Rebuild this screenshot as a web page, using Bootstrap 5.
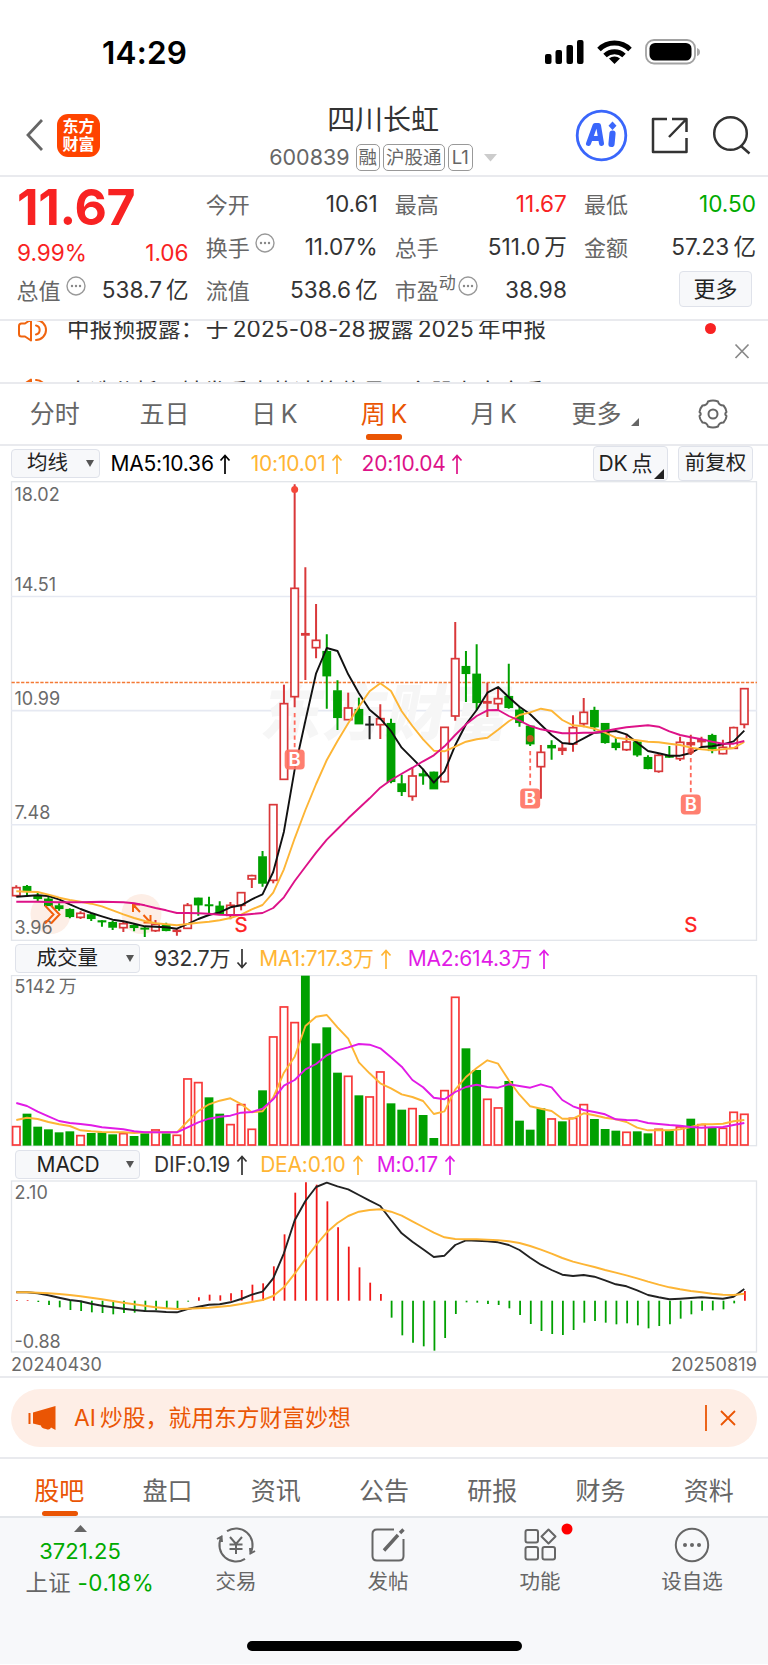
<!DOCTYPE html>
<html lang="zh-CN">
<head>
<meta charset="utf-8">
<meta name="viewport" content="width=device-width, initial-scale=1">
<title>四川长虹 600839</title>
<link rel="stylesheet" href="https://cdn.jsdelivr.net/npm/bootstrap@5.3.0/dist/css/bootstrap.min.css">
<style>
:root{--ink:#333;--sub:#666;--up:#f82222;--down:#0a0;--brand:#ea5504;--line:#e3e6ec;--panel:#f7f8fa}
body{font-family:"Inter","Noto Sans CJK SC",sans-serif;color:var(--ink);background:#fff;width:768px;line-height:1;overflow-x:hidden}
svg{display:block;flex:none}
.rule-b{border-bottom:2px solid #e9eaee}
.statusbar{height:89px;padding:16px 68px 0 102px}
.clock{font-size:31.5px;font-weight:600;color:#000;letter-spacing:.2px}
.topbar{height:88px;padding:6px 17px 0 26px}
.side{width:230px}
.logo{width:43px;height:43px;border-radius:11px;background:#ff4400;color:#fff;font-size:16px;font-weight:700;line-height:18px;margin-left:14px}
.titlebox{margin:3px 11px 0 0}
.stock-name{font-size:28px;line-height:41px;letter-spacing:-.1px;margin-top:-2px;padding-bottom:3px}
.stock-code{font-size:21.5px;color:var(--sub);margin-right:6px}
.tagbox{height:27px;border:1.5px solid #999;border-radius:5px;color:var(--sub);font-size:18.5px;padding:0 2px;margin-right:3px}
.quote{height:144px;padding:0 12px 0 17px;font-size:22.6px}
.qrow{height:43px}
.qcol{width:172px}
.qcol+.qcol{margin-left:17.5px;padding-top:6px}
.qlab{color:var(--sub);font-size:22px;margin-left:-.5px}
.qlab svg{margin:-4px 0 0 5px}
.dyn{font-size:17px;margin-top:-5px}
.last-price{font-size:50px;font-weight:700;color:var(--up);letter-spacing:-.3px;height:55px}
.chg{color:var(--up);height:33px}
.up{color:var(--up)}.down{color:var(--down)}
.softbtn{background:var(--panel);border:1.5px solid #dfe2ea;border-radius:4px;color:#222}
.notice{height:63px;overflow:hidden;padding-left:18px;font-size:22.6px;letter-spacing:.15px}
.notice-line{height:53px}
.ktab{height:62px;font-size:25px;color:var(--sub)}
.bar-u{position:absolute;left:50%;transform:translateX(-50%);bottom:4px;width:36px;height:6px;border-radius:2.5px;background:var(--brand)}
.ind{font-size:21px}
.ind .tx{white-space:nowrap;letter-spacing:-.2px}
.or{color:#ffb534}.pk{color:#dd1288}.mg{color:#e11be6}
.promo{height:58px;border-radius:29px;background:#feeee6;color:var(--brand);margin:0 11px;padding:0 20px 0 17px;font-size:22.8px}
.btabs{height:57px;padding:0 5px;font-size:25px;color:var(--sub)}
.btabs .col{padding-top:7px}
.tabbar{height:148px;background:var(--panel);border-top:2px solid #e3e6ea;color:var(--sub);font-size:20.5px}
.tb-item{width:152px;height:80px}
.homebar{width:275px;height:10px;border-radius:5px;background:#000;margin:43px auto 0}
.dates{height:25px;padding:0 11px;font-size:18px;color:#6a6a6a;letter-spacing:.1px}
</style>
</head>
<body>
<svg width="0" height="0" class="position-absolute">
  <symbol id="arr-up" viewBox="0 0 12 20"><path d="M6 20V1.5M1.5 6.5L6 1.5L10.5 6.5" fill="none" stroke="currentColor" stroke-width="1.7"/></symbol>
  <symbol id="arr-dn" viewBox="0 0 12 20"><path d="M6 0V18.5M1.5 13.5L6 18.5L10.5 13.5" fill="none" stroke="currentColor" stroke-width="1.7"/></symbol>
  <symbol id="more-c" viewBox="0 0 20 20"><circle cx="10" cy="10" r="9" fill="none" stroke="#999" stroke-width="1.4"/><g fill="#888"><circle cx="6" cy="10" r="1.2"/><circle cx="10" cy="10" r="1.2"/><circle cx="14" cy="10" r="1.2"/></g></symbol>
  <symbol id="speaker" viewBox="0 0 32 24"><g fill="none" stroke="#f0640f" stroke-width="2" stroke-linecap="round" stroke-linejoin="round"><path d="M13 1.500V22.500L7 18.500H3.500Q1 18.500 1 16V8Q1 5.500 3.500 5.500H7L13 1.500Z"/><path d="M18 7.500A4.600 4.600 0 0 1 18 16.500M18 2A10 10 0 0 1 18 22"/></g></symbol>
</svg>

<header>
  <div class="statusbar d-flex align-items-center justify-content-between">
    <span class="clock">14:29</span>
    <svg width="156" height="28" viewBox="544 39 156 28">
      <rect x="545" y="54" width="6.500" height="10" rx="2"/><rect x="555.500" y="50" width="6.500" height="14" rx="2"/><rect x="566.500" y="45" width="6.500" height="19" rx="2"/><rect x="577" y="40" width="6.500" height="24" rx="2"/>
      <g fill="none" stroke="#000" stroke-width="5"><path d="M599 49.500A22 22 0 0 1 630 49.500"/><path d="M605 55.500A14 14 0 0 1 624 55.500"/></g><path d="M614.500 64L609 58.600A8.200 8.200 0 0 1 620 58.600Z"/>
      <rect x="646" y="40" width="49" height="23.500" rx="8" fill="none" stroke="#a2a2a2" stroke-width="1.800"/><rect x="649.500" y="43" width="42" height="17.500" rx="5.500"/><path d="M697 48Q700 49 700 52T697 56Z" fill="#aaa"/>
    </svg>
  </div>
  <div class="topbar rule-b d-flex align-items-center justify-content-between">
    <div class="side d-flex align-items-center">
      <svg width="17" height="32" viewBox="0 0 17 32"><path d="M16 1L2 16L16 31" fill="none" stroke="#666" stroke-width="2.800"/></svg>
      <div class="logo d-flex flex-column justify-content-center text-center"><span>东方</span><span>财富</span></div>
    </div>
    <div class="titlebox d-flex flex-column align-items-center">
      <div class="stock-name">四川长虹</div>
      <div class="d-flex align-items-center">
        <span class="stock-code">600839</span>
        <span class="tagbox d-flex align-items-center">融</span><span class="tagbox d-flex align-items-center">沪股通</span><span class="tagbox d-flex align-items-center" style="padding:0 3px">L1</span>
        <svg width="13" height="8" class="ms-2"><path d="M0 0H13L6.500 7.500Z" fill="#ccc"/></svg>
      </div>
    </div>
    <div class="side d-flex justify-content-end">
      <svg width="176" height="54" viewBox="575 108 176 54">
        <circle cx="601.500" cy="135.500" r="24.300" fill="#fff" stroke="#3a66fb" stroke-width="2.800"/>
        <g fill="none" stroke="#3a66fb" stroke-linejoin="round" stroke-linecap="round"><path d="M588.500 143.500L595 125.500H598.500L601.500 143.500M592.500 138.500H600" stroke-width="5"/><path d="M612.500 133.500L611.500 144" stroke-width="6.200"/></g><path d="M612.500 121.500L616.500 125.700L612.500 130L608.500 125.700Z" fill="#3a66fb"/>
        <g fill="none" stroke="#333" stroke-width="2.500" stroke-linejoin="round"><path d="M667 119H653V152H686.500V138M672 119H686.500V132M686 119.500L669 137"/><circle cx="730.500" cy="133.500" r="16.300"/><path d="M741 146L749.500 153.500"/></g>
      </svg>
    </div>
  </div>
</header>

<main>
  <section class="quote rule-b d-flex">
    <div class="qcol d-flex flex-column">
      <div class="last-price d-flex align-items-end"><span>11.67</span></div>
      <div class="chg d-flex justify-content-between align-items-end"><span>9.99%</span><span>1.06</span></div>
      <div class="d-flex justify-content-between align-items-center flex-fill" style="margin-top:-3px"><span class="qlab d-flex">总值<svg width="20" height="20"><use href="#more-c"/></svg></span><span>538.7&thinsp;亿</span></div>
    </div>
    <div class="qcol">
      <div class="qrow d-flex justify-content-between align-items-center"><span class="qlab">今开</span><span>10.61</span></div>
      <div class="qrow d-flex justify-content-between align-items-center"><span class="qlab d-flex">换手<svg width="20" height="20"><use href="#more-c"/></svg></span><span>11.07%</span></div>
      <div class="qrow d-flex justify-content-between align-items-center"><span class="qlab">流值</span><span>538.6&thinsp;亿</span></div>
    </div>
    <div class="qcol">
      <div class="qrow d-flex justify-content-between align-items-center"><span class="qlab">最高</span><span class="up">11.67</span></div>
      <div class="qrow d-flex justify-content-between align-items-center"><span class="qlab">总手</span><span>511.0&thinsp;万</span></div>
      <div class="qrow d-flex justify-content-between align-items-center"><span class="qlab d-flex">市盈<span class="dyn">动</span><svg width="20" height="20" style="margin-left:2px"><use href="#more-c"/></svg></span><span>38.98</span></div>
    </div>
    <div class="qcol">
      <div class="qrow d-flex justify-content-between align-items-center"><span class="qlab">最低</span><span class="down">10.50</span></div>
      <div class="qrow d-flex justify-content-between align-items-center"><span class="qlab">金额</span><span>57.23&thinsp;亿</span></div>
      <div class="qrow d-flex justify-content-end align-items-center"><span class="softbtn d-flex align-items-center justify-content-center" style="height:36px;width:73px;font-size:22px;margin:-3px 4px 0 0">更多</span></div>
    </div>
  </section>

  <section class="notice rule-b d-flex">
    <div class="flex-fill">
      <div class="notice-line d-flex"><svg width="32" height="24" style="margin-top:-3px"><use href="#speaker"/></svg><span style="margin:-3px 0 0 17px">中报预披露：&hairsp;于&thinsp;2025-08-28&hairsp;披露&thinsp;2025&thinsp;年中报</span></div>
      <div class="notice-line d-flex pt-1"><svg width="32" height="24"><use href="#speaker"/></svg><span style="margin:3px 0 0 17px">自选分析：触发重大的决策信号，主股上方庄重</span></div>
    </div>
    <svg width="68" height="62" viewBox="700 321 68 62"><circle cx="710.500" cy="328.500" r="5.500" fill="#f82222"/><path d="M735.500 344.500L748.500 358M748.500 344.500L735.500 358" stroke="#888" stroke-width="1.700"/></svg>
  </section>

  <nav class="ktab d-flex text-center rule-b">
    <div class="col d-flex align-items-center justify-content-center">分时</div>
    <div class="col d-flex align-items-center justify-content-center">五日</div>
    <div class="col d-flex align-items-center justify-content-center">日&thinsp;K</div>
    <div class="col d-flex align-items-center justify-content-center position-relative" style="color:var(--brand)">周&thinsp;K<i class="bar-u"></i></div>
    <div class="col d-flex align-items-center justify-content-center">月&thinsp;K</div>
    <div class="col d-flex align-items-center justify-content-center"><span class="ms-1">更多</span><svg width="8" height="8" class="mt-3" style="margin-left:10px"><path d="M8 0V8H0Z" fill="#666"/></svg></div>
    <div class="col d-flex align-items-center justify-content-center"><svg width="30" height="30" viewBox="-15 -15 30 30" fill="none" stroke="#666" stroke-width="2" stroke-linejoin="round"><path d="M-5 -12.500Q0 -14.500 5 -12.500Q6 -8.500 10.500 -8.500Q13.500 -5 13.500 -2Q11 0 13.500 2Q13.500 5 10.500 8.500Q6 8.500 5 12.500Q0 14.500 -5 12.500Q-6 8.500 -10.500 8.500Q-13.500 5 -13.500 2Q-11 0 -13.500 -2Q-13.500 -5 -10.500 -8.500Q-6 -8.500 -5 -12.500Z"/><circle r="4.500"/></svg></div>
  </nav>

  <div class="ind d-flex align-items-center" style="height:35px;padding:0 15px 0 11px">
    <div class="softbtn d-flex align-items-center justify-content-between" style="width:89px;height:29px;padding:0 5px 0 15px"><span style="font-size:20.5px">均线</span><svg width="8" height="7"><path d="M0 0H8L4 7Z" fill="#555"/></svg></div>
    <span class="tx text-black" style="margin-left:10.500px">MA5:10.36</span><svg width="12" height="20" class="text-black" style="margin-left:5px"><use href="#arr-up"/></svg>
    <span class="tx or" style="margin-left:20px">10:10.01</span><svg width="12" height="20" class="or" style="margin-left:5px"><use href="#arr-up"/></svg>
    <span class="tx pk" style="margin-left:19px">20:10.04</span><svg width="12" height="20" class="pk" style="margin-left:5px"><use href="#arr-up"/></svg>
    <div class="softbtn ms-auto d-flex align-items-center justify-content-center" style="width:75px;height:35px;padding-right:3px">DK&thinsp;点<svg width="10" height="10" style="margin:20px -4px 0 1px"><path d="M10 0V10H0Z" fill="#222"/></svg></div>
    <div class="softbtn d-flex align-items-center justify-content-center" style="width:75px;height:35px;margin-left:10px;font-size:20.500px">前复权</div>
  </div>
  <svg id="kline" width="768" height="461" viewBox="0 481 768 461"></svg>

  <div class="ind d-flex align-items-center" style="height:33px;padding-left:15px">
    <div class="softbtn d-flex align-items-center justify-content-between" style="width:125px;height:29px;padding:0 5px 0 20.500px"><span style="font-size:20.500px">成交量</span><svg width="8" height="7"><path d="M0 0H8L4 7Z" fill="#555"/></svg></div>
    <span class="tx" style="margin-left:14px">932.7万</span><svg width="12" height="20" style="margin-left:6px"><use href="#arr-dn"/></svg>
    <span class="tx or" style="margin-left:11px">MA1:717.3万</span><svg width="12" height="20" class="or" style="margin-left:6px"><use href="#arr-up"/></svg>
    <span class="tx mg" style="margin-left:16px">MA2:614.3万</span><svg width="12" height="20" class="mg" style="margin-left:6px"><use href="#arr-up"/></svg>
  </div>
  <svg id="volume" width="768" height="172" viewBox="0 975 768 172"></svg>

  <div class="ind d-flex align-items-center" style="height:33px;padding:2px 0 0 15px">
    <div class="softbtn d-flex align-items-center justify-content-between" style="width:125px;height:29px;padding:0 5px 0 20.500px"><span>MACD</span><svg width="8" height="7"><path d="M0 0H8L4 7Z" fill="#555"/></svg></div>
    <span class="tx" style="margin-left:14px">DIF:0.19</span><svg width="12" height="20" style="margin-left:6px"><use href="#arr-up"/></svg>
    <span class="tx or" style="margin-left:12px">DEA:0.10</span><svg width="12" height="20" class="or" style="margin-left:6px"><use href="#arr-up"/></svg>
    <span class="tx mg" style="margin-left:13px">M:0.17</span><svg width="12" height="20" class="mg" style="margin-left:6px"><use href="#arr-up"/></svg>
  </div>
  <svg id="macd" width="768" height="173" viewBox="0 1180 768 173"></svg>
  <div class="dates rule-b d-flex justify-content-between align-items-center"><span>20240430</span><span>20250819</span></div>

  <div class="rule-b" style="padding:11px 0 10px">
    <div class="promo d-flex align-items-center">
      <svg width="28" height="24" viewBox="28 1406 28 24" fill="#ea5504"><path d="M28.500 1413H30.500V1424H28.500ZM33 1412.500L55.500 1406V1430L51 1427.500Q50 1430.500 46 1429Q41 1428 41 1425.500L33 1423.500Z"/></svg>
      <span style="margin-left:18px">AI&thinsp;炒股，就用东方财富妙想</span>
      <svg class="ms-auto" width="34" height="28"><path d="M3 1V27M18 7L32 21M32 7L18 21" stroke="#ea5504" stroke-width="1.800"/></svg>
    </div>
  </div>
  <nav class="btabs d-flex">
    <div class="col d-flex align-items-center justify-content-center position-relative" style="color:var(--brand)">股吧<i class="bar-u" style="bottom:0;height:5px;margin-left:1px"></i></div>
    <div class="col d-flex align-items-center justify-content-center">盘口</div>
    <div class="col d-flex align-items-center justify-content-center">资讯</div>
    <div class="col d-flex align-items-center justify-content-center">公告</div>
    <div class="col d-flex align-items-center justify-content-center">研报</div>
    <div class="col d-flex align-items-center justify-content-center">财务</div>
    <div class="col d-flex align-items-center justify-content-center">资料</div>
  </nav>
</main>

<footer class="tabbar">
  <div class="d-flex">
    <div class="d-flex flex-column align-items-center" style="width:160px;font-size:22px">
      <svg width="13" height="7" style="margin-top:7px"><path d="M6.500 0L13 7H0Z" fill="#666"/></svg>
      <span class="down" style="margin-top:8px">3721.25</span>
      <span class="text-nowrap" style="margin:10px 0 0 20px;font-size:22.400px;letter-spacing:.25px">上证 <span class="down" style="letter-spacing:.6px">-0.18%</span></span>
    </div>
    <div class="tb-item d-flex flex-column align-items-center">
      <svg width="42" height="38" viewBox="-21 -19 42 38" style="margin-top:8px" fill="none" stroke="#666" stroke-width="2"><path d="M-9 -13.800A16.500 16.500 0 0 1 15 7L14 9M9 13.800A16.500 16.500 0 0 1 -15 -7L-14 -9M-19 -6L-14.500 -8.500L-14 -3M19 6L14.500 8.500L14 3M-6 -8L0 -1L6 -8M0 -1V9M-6.500 -.5H6.500M-6.500 4H6.500"/></svg><span class="mt-2">交易</span>
    </div>
    <div class="tb-item d-flex flex-column align-items-center">
      <svg width="36" height="38" viewBox="-18 -19 36 38" style="margin-top:8px" fill="none" stroke="#666" stroke-width="2"><path d="M6 -15.500H-11Q-15.500 -15.500 -15.500 -11V11Q-15.500 15.500 -11 15.500H11Q15.500 15.500 15.500 11V-6"/><path d="M-4 5.500L10 -10M12 -12L15.500 -15.500" stroke-width="3.400"/></svg><span class="mt-2">发帖</span>
    </div>
    <div class="tb-item d-flex flex-column align-items-center position-relative">
      <svg width="66" height="38" viewBox="-33 -19 66 38" style="margin-top:8px;overflow:visible" fill="none" stroke="#666" stroke-width="2"><rect x="-14.500" y="-15" width="12.500" height="12.500" rx="2"/><rect x="-14.500" y="2" width="12.500" height="12.500" rx="2"/><rect x="2.500" y="2" width="12.500" height="12.500" rx="2"/><path d="M8.500 -15.500L15.500 -8.500L8.500 -1.500L1.500 -8.500Z" stroke-linejoin="round"/><circle cx="27" cy="-16" r="5.500" fill="#f00" stroke="none"/></svg><span class="mt-2">功能</span>
    </div>
    <div class="tb-item d-flex flex-column align-items-center">
      <svg width="36" height="38" viewBox="-18 -19 36 38" style="margin-top:8px"><circle r="16.200" fill="none" stroke="#666" stroke-width="2"/><g fill="#666"><circle cx="-7" r="2"/><circle r="2"/><circle cx="7" r="2"/></g></svg><span class="mt-2">设自选</span>
    </div>
  </div>
  <div class="homebar"></div>
</footer>

<script>
// Weekly series; vertical values are in thirds of a pixel from each panel's origin.
const X0 = 16.3, STEP = 10.706;
const cx = i => X0 + STEP * i;
const candles = `r 1216 1223 1247 1250,g 1215 1219 1235 1245,g 1238 1247 1256 1263,g 1250 1257 1277 1277,g 1270 1277 1286 1292,g 1285 1288 1310 1315,r 1294 1300 1312 1317,g 1300 1304 1316 1323,g 1320 1322 1326 1340,g 1322 1327 1342 1350,r 1325 1331 1343 1356,g 1333 1336 1343 1354,g 1340 1344 1347 1371,r 1320 1333 1352 1356,g 1328 1335 1352 1354,r 1348 1350 1355 1367,r 1269 1276 1345 1345,g 1253 1254 1275 1307,g 1250 1274 1277 1300,g 1264 1278 1301 1303,r 1266 1276 1306 1318,r 1238 1238 1276 1291,r 1184 1187 1197 1224,g 1113 1130 1210 1220,r 974 974 1201 1210,r 614 671 898 898,r 13 325 650 682,r 262 460 466 600,r 372 481 503 535,g 463 514 588 686,g 601 632 713 750,r 638 684 719 719,g 653 688 732 732,k 708 732 735 778,r 673 716 734 777,g 716 730 905 910,g 884 911 935 948,r 864 888 949 962,g 866 881 888 914,g 875 876 927 927,r 742 742 905 908,r 426 536 708 722,g 513 559 581 666,g 493 582 668 690,r 608 664 670 711,r 624 656 671 690,g 551 649 683 686,g 681 690 728 740,g 738 738 792 798,r 795 817 860 956,g 781 796 804 839,r 790 804 812 825,r 706 743 792 815,r 654 697 731 742,g 680 691 741 753,g 730 730 788 791,g 774 789 803 811,r 763 786 809 813,g 780 786 825 830,g 826 832 866 868,r 822 826 874 878,g 798 826 832 834,r 770 787 836 843,r 764 787 795 825,r 770 778 786 800,g 761 766 812 820,r 779 802 821 823,r 740 743 805 805,r 626 626 733 745`.split(',').map(s => { const [c, ...v] = s.split(' '); return [c, ...v.map(n => 480 + n / 3)]; });
const ma5 = [1250,1248,1246,1248,1258,1273,1287,1299,1309,1319,1324,1331,1339,1340,1342,1346,1332,1317,1305,1297,1282,1276,1258,1243,1176,1055,868,722,580,504,513,583,640,689,716,753,803,835,868,908,874,796,733,690,638,621,652,680,703,734,765,789,792,775,758,756,753,763,788,813,820,827,827,819,801,799,793,784,752];
const ma10 = [1234,1235,1236,1244,1253,1260,1265,1271,1279,1291,1303,1314,1323,1330,1333,1336,1332,1328,1325,1321,1314,1304,1288,1275,1238,1168,1075,990,912,840,783,730,680,634,610,633,694,738,778,812,814,800,785,778,773,749,724,705,697,686,692,720,736,739,746,758,773,777,781,785,787,791,795,803,808,811,808,804,786];
const ma20 = [1265,1265,1265,1266,1267,1267,1267,1266,1265,1266,1267,1270,1276,1284,1291,1299,1299,1300,1301,1304,1305,1305,1302,1299,1284,1252,1203,1160,1118,1079,1047,1015,985,955,923,900,881,863,844,826,799,765,733,708,691,690,708,722,738,748,754,760,760,758,758,753,747,742,739,736,740,754,765,772,778,785,791,791,783];
const vols = 'r559 g521 g560 g568 g577 g574 r586 g579 g577 g583 r580 g588 g580 r569 g580 r585 r416 r427 g472 g521 r553 r493 r567 g451 r290 r200 r247 g107 g310 g262 g398 r408 g466 r470 r395 g490 g509 r505 g525 g594 r451 r171 g325 g390 r477 r503 g423 g542 g569 g505 r536 g544 r534 r493 g537 g567 g572 r576 g574 g580 r567 g572 r560 g536 r553 g564 r564 r516 r522'.split(' ');
const vma1 = [540,533,537,546,553,558,571,574,576,577,577,579,577,577,576,577,544,513,493,482,475,492,517,514,473,398,350,258,230,225,262,296,367,400,430,445,463,471,483,522,514,449,411,384,361,371,421,464,499,506,513,536,536,520,526,533,538,546,563,571,571,571,568,561,553,553,551,544,540];
const vma2 = [489,498,515,529,543,549,552,556,562,565,568,574,577,577,577,577,562,547,536,530,527,518,516,506,478,437,420,388,372,346,331,322,312,314,325,352,380,420,442,473,478,456,441,434,441,443,433,438,443,433,442,480,499,510,516,523,538,540,541,549,552,555,557,561,563,562,561,555,549];
const hist = [465,465,471,480,487,495,498,502,504,508,504,503,498,496,492,490,470,457,449,451,445,435,419,415,364,268,143,112,119,169,247,305,367,413,447,518,571,593,604,617,579,507,472,473,477,480,490,510,537,558,567,570,555,533,528,533,538,535,541,550,543,538,521,508,497,496,493,475,438];
const dif = [442,442,445,451,458,465,469,476,482,487,491,495,498,499,501,502,492,485,479,478,472,462,449,440,400,325,226,168,126,113,124,133,150,167,183,225,265,290,313,336,332,300,286,287,289,292,300,315,338,359,375,389,393,390,395,406,418,424,436,450,457,463,461,459,457,459,461,455,432];
const dea = [442,442,443,445,447,450,454,458,463,468,473,478,482,487,490,492,491,490,488,485,482,477,471,465,453,427,386,342,300,262,234,213,200,195,193,200,212,229,246,263,277,282,283,283,284,286,289,294,303,314,326,339,350,358,366,375,383,391,400,410,419,427,433,438,442,446,449,450,446];

const poly = (a, base, col, w = 1.9) => `<polyline fill="none" stroke="${col}" stroke-width="${w}" stroke-linejoin="round" points="${a.map((v, i) => cx(i).toFixed(1) + ',' + (base + v / 3).toFixed(1)).join(' ')}"/>`;
const frame = (y, b) => `<rect x="11.500" y="${y}" width="745" height="${b - y}" fill="none" stroke="#e2e5ea" stroke-width="1.300"/>`;
const label = (t, y) => `<text x="14.500" y="${y}" font-size="18" fill="#6a6a6a">${t}</text>`;
const COL = {r: '#d9383a', g: '#00a000', k: '#222'};

let k = frame(481.7, 940.3);
[596.5, 710.6, 824.7].forEach(y => k += `<path d="M11 ${y}H757" stroke="#e6e9f2" stroke-width="1.600"/>`);
k += `<text x="262" y="735" font-size="61" font-weight="900" fill="#f6f6f6" transform="translate(140 0) skewX(-11)" textLength="248">东方财富</text>`;
k += `<circle cx="50.500" cy="914" r="20" fill="#fdeee6"/><circle cx="141.500" cy="914" r="20" fill="#fdeee6"/>`;
k += '<path d="M11.500 682.500H757" stroke="#f47a35" stroke-width="1.600" stroke-dasharray="3.300 1.500"/>';
k += label('18.02', 501) + label('14.51', 590.5) + label('10.99', 705) + label('7.48', 819) + label('3.96', 934);
candles.forEach(([c, h, t, b, l], i) => {
  const x = cx(i), col = COL[c];
  k += `<path d="M${x} ${h}V${t}M${x} ${b}V${l}" stroke="${col}" stroke-width="2"/>`;
  const bh = Math.max(b - t, 1.2);
  k += c === 'r' && bh > 2.8 ? `<rect x="${x - 3.7}" y="${t}" width="7.400" height="${bh}" fill="#fff" stroke="${col}" stroke-width="1.700"/>`
                 : `<rect x="${x - 4.4}" y="${t - .4}" width="8.800" height="${bh + .8}" fill="${col}"/>`;
});
k += '<path d="M45 905.500L53.500 914.500L45 923.500M51 905.500L59.500 914.500L51 923.500M140 912L133 904.500M133 912V904.500H140M143.500 915L150.500 922.500M143.500 922.500H150.500V915" fill="none" stroke="#f2600c" stroke-width="2"/>';
k += poly(ma5, 480, '#111') + poly(ma10, 480, '#fdb535') + poly(ma20, 480, '#dd1288');
k += `<circle cx="${cx(26)}" cy="489.500" r="3.500" fill="#f5483a"/><circle cx="${cx(48)}" cy="738.500" r="3.500" fill="#bb5a1c"/><circle cx="${cx(63)}" cy="751" r="3.300" fill="#f5483a" opacity=".8"/>`;
[[26, 713, 759.5], [48, 751, 798.5], [63, 758, 804.5]].forEach(([i, a, y]) => {
  k += `<path d="M${cx(i)} ${a}V${y - 12}" stroke="#ff6a5c" stroke-width="1.800" stroke-dasharray="4.200 3.300"/><rect x="${cx(i) - 10}" y="${y - 10}" width="20" height="20" rx="4" fill="#ff7464" opacity=".92"/><text x="${cx(i)}" y="${y + 6.8}" font-size="18.500" font-weight="600" fill="#fff" text-anchor="middle">B</text>`;
});
k += `<text x="${cx(21)}" y="932" font-size="20.500" fill="#f22" stroke="#f22" stroke-width=".3" text-anchor="middle">S</text><text x="${cx(63)}" y="932" font-size="20.500" fill="#f22" stroke="#f22" stroke-width=".3" text-anchor="middle">S</text>`;
document.getElementById('kline').innerHTML = k;

let v = frame(975.5, 1145.7) + label('5142\u2009万', 993);
vols.forEach((s, i) => {
  const t = 940 + s.slice(1) / 3, x = cx(i);
  v += s[0] === 'r' ? `<rect x="${x - 3.7}" y="${t + .3}" width="7.400" height="${1145 - t - .3}" fill="#fff" stroke="#f83a3a" stroke-width="1.700"/>`
                    : `<rect x="${x - 4.4}" y="${t}" width="8.800" height="${1145.6 - t}" fill="#00a000"/>`;
});
v += poly(vma1, 940, '#fdb535') + poly(vma2, 940, '#e11be6');
document.getElementById('volume').innerHTML = v;

let m = frame(1181, 1352);
hist.forEach((s, i) => m += `<path d="M${cx(i) + .6} 1300.700V${1145 + s / 3}" stroke="${s < 467 ? '#f01818' : '#00a000'}" stroke-width="1.800"/>`);
m += poly(dif, 1145, '#222') + poly(dea, 1145, '#fdb535') + label('2.10', 1199) + label('-0.88', 1347.5);
document.getElementById('macd').innerHTML = m;
</script>
<script src="https://cdn.jsdelivr.net/npm/bootstrap@5.3.0/dist/js/bootstrap.bundle.min.js"></script>
</body>
</html>
